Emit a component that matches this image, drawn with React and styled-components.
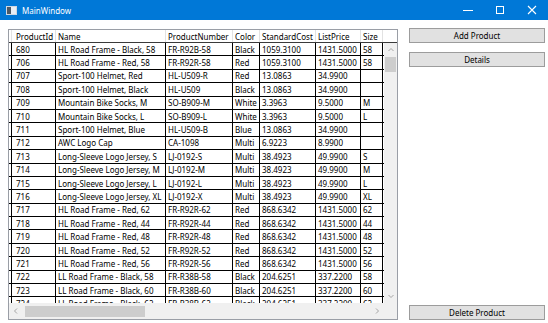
import React from "react";
import styled, { createGlobalStyle } from "styled-components";

const GlobalStyle = createGlobalStyle`
  html, body {
    margin: 0;
    padding: 0;
    background: #ffffff;
  }
  body {
    font-family: "Noto Sans", "Segoe UI", sans-serif;
    font-size: 8px;
    color: #000;
  }
`;

// layout

const Window = styled.div`
  width: 548px;
  height: 323px;
  display: flex;
  flex-direction: column;
  overflow: hidden;
  background: #fff;
`;

const TitleBar = styled.div`
  height: 20px;
  flex: 0 0 20px;
  background: #0078d7;
  display: flex;
  align-items: center;
  padding-left: 6px;
  color: #fff;
`;

const TitleText = styled.span`
  margin-left: 5px;
  font-size: 8px;
`;

const Controls = styled.div`
  margin-left: auto;
  display: flex;
  height: 100%;
`;

const ControlBtn = styled.div`
  width: 32px;
  height: 100%;
  display: flex;
  align-items: center;
  justify-content: center;
`;

const Client = styled.div`
  flex: 1;
  display: flex;
  padding: 8px 3px 3px 8px;
  min-height: 0;
`;

const GridFrame = styled.div`
  margin-top: 1px;
  width: 390px;
  height: 291px;
  box-sizing: border-box;
  border: 1px solid #9a9ea6;
  display: grid;
  grid-template-columns: 1fr 13px;
  grid-template-rows: 13px 1fr 16px;
  grid-template-areas:
    "head head"
    "body vs"
    "hs corner";
  overflow: hidden;
`;

const Header = styled.div`
  grid-area: head;
  display: flex;
  border-bottom: 1px solid #3a3a3a;
  box-sizing: border-box;
  overflow: hidden;
`;

const HeadCell = styled.div`
  flex: 0 0 ${(p) => p.$w}px;
  box-sizing: border-box;
  border-right: 1px solid #e2e2e2;
  padding-left: ${(p) => p.$pad ?? 2}px;
  display: flex;
  align-items: center;
  white-space: nowrap;
  overflow: hidden;
`;

const Body = styled.div`
  grid-area: body;
  overflow: hidden;
`;

const Row = styled.div`
  display: flex;
  height: 13.4px;
  box-sizing: border-box;
  border-bottom: 1px solid #000;
`;

const Cell = styled.div`
  flex: 0 0 ${(p) => p.$w}px;
  box-sizing: border-box;
  border-right: 1px solid #000;
  padding-left: ${(p) => p.$pad ?? 2}px;
  display: flex;
  align-items: center;
  white-space: nowrap;
  overflow: hidden;
`;

const VScroll = styled.div`
  grid-area: vs;
  background: #f0f0f0;
  display: flex;
  flex-direction: column;
`;

const HScroll = styled.div`
  grid-area: hs;
  background: #f0f0f0;
  display: flex;
  align-items: center;
`;

const Corner = styled.div`
  grid-area: corner;
  background: #f0f0f0;
`;

const ArrowBox = styled.div`
  flex: 0 0 ${(p) => p.$size}px;
  display: flex;
  align-items: center;
  justify-content: center;
`;

const VThumb = styled.div`
  margin: 0 1px;
  height: 15px;
  background: #cdcdcd;
`;

const HThumb = styled.div`
  height: 11px;
  width: 120px;
  margin-left: 2px;
  background: #cdcdcd;
`;

const Spacer = styled.div`
  flex: 1;
`;

const Side = styled.div`
  width: 136px;
  margin-left: 11px;
  display: flex;
  flex-direction: column;
  gap: 9px;
`;

const Button = styled.button`
  height: 15px;
  padding: 0;
  box-sizing: border-box;
  border: 1px solid #9c9c9c;
  background: #e1e1e1;
  font-family: inherit;
  font-size: 8px;
  color: #000;
  line-height: 12px;
  margin-top: ${(p) => (p.$bottom ? "auto" : "0")};
`;

// data

const columns = [
  { key: "id", title: "ProductId", w: 44, pad: 4 },
  { key: "name", title: "Name", w: 110 },
  { key: "num", title: "ProductNumber", w: 67 },
  { key: "color", title: "Color", w: 27 },
  { key: "cost", title: "StandardCost", w: 56 },
  { key: "price", title: "ListPrice", w: 45 },
  { key: "size", title: "Size", w: 22 },
  { key: "more", title: "", w: 60 },
];

const rows = [
  ["680", "HL Road Frame - Black, 58", "FR-R92B-58", "Black", "1059.3100", "1431.5000", "58"],
  ["706", "HL Road Frame - Red, 58", "FR-R92R-58", "Red", "1059.3100", "1431.5000", "58"],
  ["707", "Sport-100 Helmet, Red", "HL-U509-R", "Red", "13.0863", "34.9900", ""],
  ["708", "Sport-100 Helmet, Black", "HL-U509", "Black", "13.0863", "34.9900", ""],
  ["709", "Mountain Bike Socks, M", "SO-B909-M", "White", "3.3963", "9.5000", "M"],
  ["710", "Mountain Bike Socks, L", "SO-B909-L", "White", "3.3963", "9.5000", "L"],
  ["711", "Sport-100 Helmet, Blue", "HL-U509-B", "Blue", "13.0863", "34.9900", ""],
  ["712", "AWC Logo Cap", "CA-1098", "Multi", "6.9223", "8.9900", ""],
  ["713", "Long-Sleeve Logo Jersey, S", "LJ-0192-S", "Multi", "38.4923", "49.9900", "S"],
  ["714", "Long-Sleeve Logo Jersey, M", "LJ-0192-M", "Multi", "38.4923", "49.9900", "M"],
  ["715", "Long-Sleeve Logo Jersey, L", "LJ-0192-L", "Multi", "38.4923", "49.9900", "L"],
  ["716", "Long-Sleeve Logo Jersey, XL", "LJ-0192-X", "Multi", "38.4923", "49.9900", "XL"],
  ["717", "HL Road Frame - Red, 62", "FR-R92R-62", "Red", "868.6342", "1431.5000", "62"],
  ["718", "HL Road Frame - Red, 44", "FR-R92R-44", "Red", "868.6342", "1431.5000", "44"],
  ["719", "HL Road Frame - Red, 48", "FR-R92R-48", "Red", "868.6342", "1431.5000", "48"],
  ["720", "HL Road Frame - Red, 52", "FR-R92R-52", "Red", "868.6342", "1431.5000", "52"],
  ["721", "HL Road Frame - Red, 56", "FR-R92R-56", "Red", "868.6342", "1431.5000", "56"],
  ["722", "LL Road Frame - Black, 58", "FR-R38B-58", "Black", "204.6251", "337.2200", "58"],
  ["723", "LL Road Frame - Black, 60", "FR-R38B-60", "Black", "204.6251", "337.2200", "60"],
  ["724", "LL Road Frame - Black, 62", "FR-R38B-62", "Black", "204.6251", "337.2200", "62"],
];

// icons

const AppIcon = () => (
  <svg width="11" height="9" viewBox="0 0 11 9">
    <rect x="0.5" y="0.5" width="10" height="8" fill="#e8eef5" stroke="#cfd8e2" />
    <rect x="1" y="1" width="4" height="7" fill="#4d5a66" />
  </svg>
);

const Chevron = ({ dir }) => {
  const d = {
    up: "M1.5 5 L4 2.5 L6.5 5",
    down: "M1.5 3 L4 5.5 L6.5 3",
    left: "M5 1.5 L2.5 4 L5 6.5",
    right: "M3 1.5 L5.5 4 L3 6.5",
  }[dir];
  return (
    <svg width="8" height="8" viewBox="0 0 8 8">
      <path d={d} fill="none" stroke="#a6a6a6" strokeWidth="1" />
    </svg>
  );
};

const App = () => {
  return (
    <>
      <GlobalStyle />
      <Window>
        <TitleBar>
          <AppIcon />
          <TitleText>MainWindow</TitleText>
          <Controls>
            <ControlBtn>
              <svg width="10" height="10" viewBox="0 0 10 10">
                <path d="M0 5.5 H10" stroke="#fff" strokeWidth="1" />
              </svg>
            </ControlBtn>
            <ControlBtn>
              <svg width="10" height="10" viewBox="0 0 10 10">
                <rect x="1.5" y="1.5" width="7" height="7" fill="none" stroke="#fff" />
              </svg>
            </ControlBtn>
            <ControlBtn>
              <svg width="10" height="10" viewBox="0 0 10 10">
                <path d="M1 1 L9 9 M9 1 L1 9" stroke="#fff" strokeWidth="1.1" />
              </svg>
            </ControlBtn>
          </Controls>
        </TitleBar>
        <Client>
          <GridFrame>
            <Header>
              <HeadCell $w={3} $pad={0} />
              {columns.map((c) => (
                <HeadCell key={c.key} $w={c.w} $pad={c.pad}>
                  {c.title}
                </HeadCell>
              ))}
            </Header>
            <Body>
              {rows.map((r) => (
                <Row key={r[0]}>
                  <Cell $w={3} $pad={0} />
                  {columns.map((c, i) => (
                    <Cell key={c.key} $w={c.w} $pad={c.pad}>
                      {r[i] ?? ""}
                    </Cell>
                  ))}
                </Row>
              ))}
            </Body>
            <VScroll>
              <ArrowBox $size={14}>
                <Chevron dir="up" />
              </ArrowBox>
              <VThumb />
              <Spacer />
              <ArrowBox $size={14}>
                <Chevron dir="down" />
              </ArrowBox>
            </VScroll>
            <HScroll>
              <ArrowBox $size={14}>
                <Chevron dir="left" />
              </ArrowBox>
              <HThumb />
              <Spacer />
              <ArrowBox $size={14}>
                <Chevron dir="right" />
              </ArrowBox>
            </HScroll>
            <Corner />
          </GridFrame>
          <Side>
            <Button>Add Product</Button>
            <Button>Details</Button>
            <Button $bottom>Delete Product</Button>
          </Side>
        </Client>
      </Window>
    </>
  );
};

export default App;
